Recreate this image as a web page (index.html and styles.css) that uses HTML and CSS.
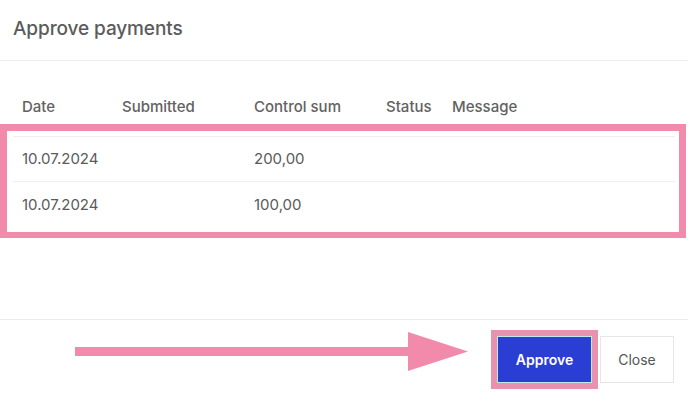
FILE: index.html
```html
<!DOCTYPE html>
<html>
<head>
<meta charset="utf-8">
<link rel="stylesheet" href="styles.css">
</head>
<body>
<div class="modal">
  <div class="modal-header">
    <h1 class="title">Approve payments</h1>
  </div>
  <div class="modal-body">
    <div class="row head-row">
      <div class="cell">Date</div>
      <div class="cell">Submitted</div>
      <div class="cell">Control sum</div>
      <div class="cell">Status</div>
      <div class="cell">Message</div>
    </div>
    <div class="highlight">
      <div class="row data-row">
        <div class="cell">10.07.2024</div>
        <div class="cell"></div>
        <div class="cell">200,00</div>
        <div class="cell"></div>
        <div class="cell"></div>
      </div>
      <div class="row data-row">
        <div class="cell">10.07.2024</div>
        <div class="cell"></div>
        <div class="cell">100,00</div>
        <div class="cell"></div>
        <div class="cell"></div>
      </div>
    </div>
  </div>
  <div class="modal-footer">
    <svg class="arrow" width="394" height="40" viewBox="0 0 394 40">
      <rect x="0" y="15" width="342" height="9" fill="#f28bab"/>
      <polygon points="333,0 393,19.5 333,39" fill="#f28bab"/>
    </svg>
    <button class="btn btn-primary">Approve</button>
    <button class="btn btn-secondary">Close</button>
  </div>
</div>
</body>
</html>
```

FILE: styles.css
```css
* { box-sizing: border-box; }
html, body {
  margin: 0;
  padding: 0;
  background: #ffffff;
}
body {
  font-family: Inter, "Noto Sans", sans-serif;
  color: #5a5a5a;
  width: 688px;
  height: 394px;
  overflow: hidden;
}
.modal {
  display: flex;
  flex-direction: column;
  height: 394px;
}
.modal-header {
  height: 61px;
  border-bottom: 1px solid #ececec;
  padding: 0 13px;
  display: flex;
  align-items: flex-start;
}
.title {
  margin: 0;
  padding-top: 16px;
  font-size: 19px;
  font-weight: 500;
  color: #5b5b5b;
  line-height: 26px;
  letter-spacing: -0.1px;
}
.modal-body {
  height: 259px;
  border-bottom: 1px solid #ececec;
  padding-top: 28px;
}
.row {
  display: grid;
  grid-template-columns: 100px 132px 132px 66px 1fr;
  padding-left: 9px;
  align-items: center;
  font-size: 15px;
}
.head-row {
  height: 35px;
  margin: 0 13px;
  font-weight: 500;
  color: #626262;
  align-items: start;
  padding-top: 8px;
}
.highlight {
  border: 7px solid #f28bab;
  border-bottom-width: 6px;
  width: 686px;
  padding: 5px 4px 4px 6px;
}
.data-row {
  border-top: 1px solid #efefef;
  height: 45px;
  padding-bottom: 2px;
  color: #5a5a5a;
}
.data-row + .data-row {
  height: 47px;
  padding-bottom: 2px;
}
.modal-footer {
  flex: 1;
  display: flex;
  justify-content: flex-end;
  align-items: flex-start;
  padding: 16px 14px 0 0;
}
.arrow {
  display: block;
  margin-right: 28px;
  margin-top: -4px;
}
.btn {
  font-family: Inter, "Noto Sans", sans-serif;
  font-size: 14px;
  height: 47px;
  margin: 0;
  cursor: pointer;
}
.btn-primary {
  width: 95px;
  background: #2a3ed3;
  color: #ffffff;
  border: 1px solid #bfe9ea;
  font-weight: 600;
  outline: 6px solid #e992ad;
  outline-offset: 0;
  margin-right: 8px;
}
.btn-secondary {
  width: 74px;
  background: #ffffff;
  color: #555555;
  border: 1px solid #e6e6e6;
  font-weight: 400;
}
```
